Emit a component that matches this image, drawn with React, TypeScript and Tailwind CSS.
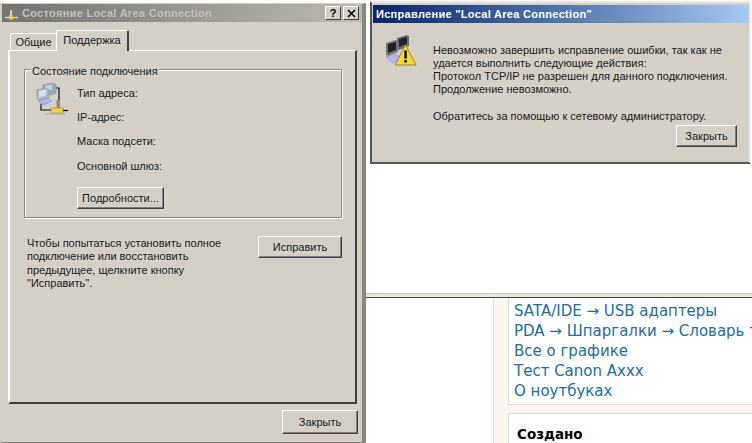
const font = { fontFamily: '"Liberation Sans", Arial, sans-serif' };

function Btn({ children, className }: { children: React.ReactNode; className: string }) {
  return (
    <div className={`flex items-center justify-center bg-[#d4d0c8] border border-t-white border-l-white border-r-[#404040] border-b-[#404040] shadow-[inset_-1px_-1px_0_#808080] text-[11px] text-[#1a1a1a] ${className}`}>
      {children}
    </div>
  );
}

function NetIcon() {
  return (
    <svg width="34" height="34" viewBox="0 0 34 34" className="shrink-0">
      <path d="M20 5h4v14" fill="none" stroke="#111" strokeWidth="1.200" />
      <path d="M6 21v6h12" fill="none" stroke="#111" strokeWidth="1.200" />
      <path d="M8 2l10-2 3 2v8l-9 3-4-2z" fill="#9fa9bb" stroke="#8791a6" strokeWidth="0.700" />
      <path d="M10 3l7-1.500v5l-7 2z" fill="#c7d0de" />
      <path d="M2 7l9-2 3 2v8l-8 3-4-2z" fill="#aeb9cc" stroke="#8791a6" strokeWidth="0.700" />
      <path d="M4 8l7-1.500v6l-7 2z" fill="#d8dfeb" />
      <path d="M3 18l9-3 5 3-9 4z" fill="#b4b4ee" stroke="#8d8dcc" strokeWidth="0.700" />
      <rect x="21.500" y="17" width="3.500" height="8" fill="#8f8d80" />
      <rect x="16" y="25" width="12" height="5" fill="#ecd14a" stroke="#a08a20" strokeWidth="0.600" />
      <path d="M28 27.500h5" stroke="#111" strokeWidth="1.300" />
      <path d="M10 31h21" stroke="#a9a69c" strokeWidth="1" />
    </svg>
  );
}

function WarnIcon() {
  return (
    <svg width="34" height="34" viewBox="0 0 34 34" className="shrink-0">
      <path d="M12 4l10-3 2 1v10l-10 4-2-1z" fill="#6b6b70" />
      <path d="M14 5l8-2v7l-8 3z" fill="#1f1f24" />
      <path d="M1 9l10-3 2 1v11l-10 4-2-1z" fill="#77777c" />
      <path d="M3 10l8-2v8l-8 3z" fill="#1f1f24" />
      <path d="M1 23l9-3 6 4-8 5z" fill="#b8b8ec" stroke="#8f8fc8" strokeWidth="0.700" />
      <path d="M20.500 11L31 31H10z" fill="#f6d936" stroke="#a08a18" strokeLinejoin="round" />
      <rect x="19.300" y="16.500" width="2.600" height="8" fill="#111" />
      <rect x="19.300" y="26" width="2.600" height="2.600" fill="#111" />
    </svg>
  );
}

function TinyPlug() {
  return (
    <svg width="16" height="16" viewBox="0 0 16 16" className="shrink-0">
      <rect x="8" y="5" width="2" height="7" fill="#d6d3c2" />
      <path d="M3 12.500h13" stroke="#e8e6dc" strokeWidth="1.200" />
      <rect x="7" y="10.500" width="4" height="4" fill="#e8cb3c" />
    </svg>
  );
}

function Row({ children }: { children: React.ReactNode }) {
  return <div className="h-[24.300px] flex items-center">{children}</div>;
}

export default function App() {
  return (
    <div className="w-[752px] h-[443px] flex bg-white overflow-hidden text-[#1a1a1a]" style={font}>
      {/* Left window */}
      <div className="w-[366px] h-[443px] pt-[3px] shrink-0">
        <div className="h-[440px] bg-[#d4d0c8] border-t border-[#d4d0c8] border-l-2 border-r-4 border-b-[1px] border-r-[#8a877f] border-b-[#808080]">
          <div className="h-[18px] flex items-center bg-gradient-to-r from-[#747472] to-[#bdbab3] pr-[3px]">
            <TinyPlug />
            <span className="ml-[4px] text-[11px] font-bold tracking-[0.3px] text-[#c4c1b8] leading-none">Состояние Local Area Connection</span>
            <div className="ml-auto flex gap-[2px]">
              <div className="w-[16px] h-[14px] bg-[#d4d0c8] border border-t-white border-l-white border-r-[#404040] border-b-[#404040] flex items-center justify-center text-[11px] font-bold text-black leading-none">?</div>
              <div className="w-[16px] h-[14px] bg-[#d4d0c8] border border-t-white border-l-white border-r-[#404040] border-b-[#404040] flex items-center justify-center">
                <svg width="9" height="9" viewBox="0 0 9 9"><path d="M1 1l7 7M8 1l-7 7" stroke="#000" strokeWidth="1.600" /></svg>
              </div>
            </div>
          </div>

          <div className="pl-[6px] pt-[8px] w-[355px]">
            <div className="flex items-end h-[21px] relative z-10 -mb-px">
              <div className="w-[46px] h-[18px] ml-[2px] border-t border-l border-white flex items-center justify-center text-[11px] rounded-tl-[2px]">Общие</div>
              <div className="w-[73px] h-[21px] border-t border-l border-white border-r-2 border-r-[#404040] bg-[#d4d0c8] flex items-center justify-center text-[11px] rounded-t-[2px] pb-[2px]">Поддержка</div>
            </div>
            <div className="h-[354px] w-[349px] border border-l-2 border-t-white border-l-white border-r-2 border-r-[#404040] border-b-2 border-b-[#404040] pl-[14px] pt-[18px]">
              <div className="relative w-[318px] h-[149px] border border-[#8f8c84] shadow-[1px_1px_0_#fff,inset_1px_1px_0_#fff] pl-[10px] pt-[13px]">
                <div className="absolute -top-[5px] left-[6px] bg-[#d4d0c8] px-[1px] text-[11px] leading-[13px]">Состояние подключения</div>
                <div className="flex">
                  <NetIcon />
                  <div className="ml-[8px] -mt-[2px] text-[11px] leading-none">
                    <Row>Тип адреса:</Row>
                    <Row>IP-адрес:</Row>
                    <Row>Маска подсети:</Row>
                    <Row>Основной шлюз:</Row>
                    <Btn className="w-[87px] h-[22px] mt-[9px]">Подробности...</Btn>
                  </div>
                </div>
              </div>
              <div className="flex mt-[18px] pl-[3px]">
                <p className="w-[210px] pt-[1px] text-[11px] leading-[13.300px]">
                  Чтобы попытаться установить полное<br />подключение или восстановить<br />предыдущее, щелкните кнопку<br />"Исправить".
                </p>
                <Btn className="w-[84px] h-[22px] ml-[21px]">Исправить</Btn>
              </div>
            </div>
            <Btn className="w-[76px] h-[24px] mt-[6px] ml-[274px]">Закрыть</Btn>
          </div>
        </div>
      </div>

      {/* Right column */}
      <div className="w-[386px] flex flex-col shrink-0">
        <div className="h-[163px] mt-[1px] ml-[4px] mr-[1px] bg-[#d4d0c8] border-2 border-t-[#ece9e2] border-l-[#555] border-b-[#555] border-r-[#eee] pl-[1px] pt-[2px]">
          <div className="h-[18px] flex items-center pl-[3px] bg-gradient-to-r from-[#0a246a] to-[#a6caf0]">
            <span className="text-[11px] font-bold tracking-[0.3px] text-white leading-none">Исправление "Local Area Connection"</span>
          </div>
          <div className="flex pl-[12px] pt-[11px]">
            <WarnIcon />
            <div className="ml-[14px] pt-[10px] text-[11px] leading-[13px]">
              <p>Невозможно завершить исправление ошибки, так как не<br />удается выполнить следующие действия:<br />Протокол TCP/IP не разрешен для данного подключения.<br />Продолжение невозможно.</p>
              <p className="mt-[14px]">Обратитесь за помощью к сетевому администратору.</p>
              <Btn className="w-[61px] h-[22px] mt-[2px] ml-[243px]">Закрыть</Btn>
            </div>
          </div>
        </div>
        <div className="flex-1 min-h-0 bg-white" />
        <div className="h-[5px] bg-[#e8e6df] border-t border-[#c8c6c0] border-b border-b-[#444]" />
        <div className="h-[145px] flex overflow-hidden" style={{ fontFamily: '"DejaVu Sans", Verdana, sans-serif' }}>
          <div className="w-[127px] h-full bg-white shrink-0" />
          <div className="flex-1 min-w-0 bg-[#fcf8f0] border-l border-[#dedbcf] pl-[14px]">
            <div className="h-[107px] bg-white border border-t-0 border-r-0 border-[#dedbcf] pl-[5px] pt-[3px] text-[15px] leading-[20px] text-[#236c9b] whitespace-nowrap overflow-hidden">
              <div>SATA/IDE → USB адаптеры</div>
              <div>PDA → Шпаргалки → Словарь т</div>
              <div>Все о графике</div>
              <div>Тест Canon Axxx</div>
              <div>О ноутбуках</div>
            </div>
            <div className="h-[40px] mt-[8px] bg-white border-t border-l border-[#dedbcf] pl-[8px] pt-[10px] text-[13.500px] font-bold leading-[20px] text-black">Создано</div>
          </div>
        </div>
      </div>
    </div>
  );
}
